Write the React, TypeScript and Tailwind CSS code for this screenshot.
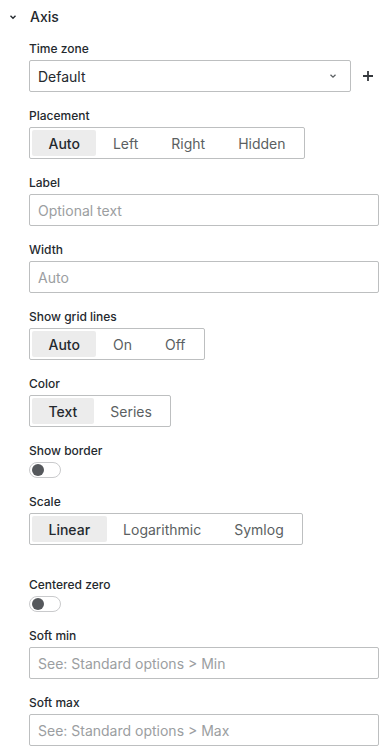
import React from "react";

const Label = ({ children }: { children: React.ReactNode }) => (
  <div className="text-[12px] leading-[15px] font-medium text-[#24292e] mb-1">{children}</div>
);

const Field = ({ label, children }: { label: string; children: React.ReactNode }) => (
  <div className="mb-4">
    <Label>{label}</Label>
    {children}
  </div>
);

const Input = ({ placeholder }: { placeholder: string }) => (
  <div className="h-8 w-[350px] border border-[#bdbfc0] rounded-[2px] flex items-center px-2 text-[14px] text-[#9b9ea1] bg-white">
    {placeholder}
  </div>
);

const Radio = ({ options, active = 0 }: { options: string[]; active?: number }) => (
  <div className="inline-flex h-8 border border-[#bdbfc0] rounded-[2px] p-[2px] bg-white">
    {options.map((o, i) => (
      <div
        key={o}
        className={
          i === active
            ? "px-[16.5px] h-full flex items-center rounded-[2px] bg-[#ececec] text-[14px] font-medium text-[#24292e]"
            : "px-[16.5px] h-full flex items-center text-[14px] text-[#5b5f62]"
        }
      >
        {o}
      </div>
    ))}
  </div>
);

const Switch = () => (
  <div className="w-8 h-4 rounded-full border border-[#c9cacc] bg-white flex items-center pl-[2px]">
    <div className="w-3 h-3 rounded-full bg-[#55585c]" />
  </div>
);

export default function App() {
  return (
    <div className="w-[387px] h-[756px] bg-white overflow-hidden" style={{ fontFamily: "Inter, 'Noto Sans', sans-serif" }}>
      <div className="h-[33px] flex items-center">
        <div className="w-[30px] flex items-center justify-center pr-[4px]">
          <svg width="8" height="6" viewBox="0 0 8 6" className="mt-[1px]">
            <path d="M1.5 1.8 L4 4.2 L6.5 1.8" fill="none" stroke="#24292e" strokeWidth="1.4" />
          </svg>
        </div>
        <span className="text-[14px] font-medium text-[#24292e]">Axis</span>
      </div>
      <div className="pl-[29px] pt-2">
        <Field label="Time zone">
          <div className="flex items-center">
            <div className="h-8 w-[322px] border border-[#bdbfc0] rounded-[2px] flex items-center justify-between pl-2 pr-[13px] text-[14px] text-[#24292e]">
              <span>Default</span>
              <svg width="8" height="6" viewBox="0 0 8 6">
                <path d="M1.5 1.8 L4 4.2 L6.5 1.8" fill="none" stroke="#5b5f62" strokeWidth="1.3" />
              </svg>
            </div>
            <div className="ml-[11px]">
              <svg width="12" height="12" viewBox="0 0 12 12">
                <path d="M6 1 V11 M1 6 H11" stroke="#35393d" strokeWidth="1.8" />
              </svg>
            </div>
          </div>
        </Field>
        <Field label="Placement">
          <Radio options={["Auto", "Left", "Right", "Hidden"]} />
        </Field>
        <Field label="Label">
          <Input placeholder="Optional text" />
        </Field>
        <Field label="Width">
          <Input placeholder="Auto" />
        </Field>
        <Field label="Show grid lines">
          <Radio options={["Auto", "On", "Off"]} />
        </Field>
        <Field label="Color">
          <Radio options={["Text", "Series"]} />
        </Field>
        <Field label="Show border">
          <Switch />
        </Field>
        <Field label="Scale">
          <Radio options={["Linear", "Logarithmic", "Symlog"]} />
        </Field>
        <div className="h-4" />
        <Field label="Centered zero">
          <Switch />
        </Field>
        <Field label="Soft min">
          <Input placeholder="See: Standard options > Min" />
        </Field>
        <Field label="Soft max">
          <Input placeholder="See: Standard options > Max" />
        </Field>
      </div>
    </div>
  );
}
